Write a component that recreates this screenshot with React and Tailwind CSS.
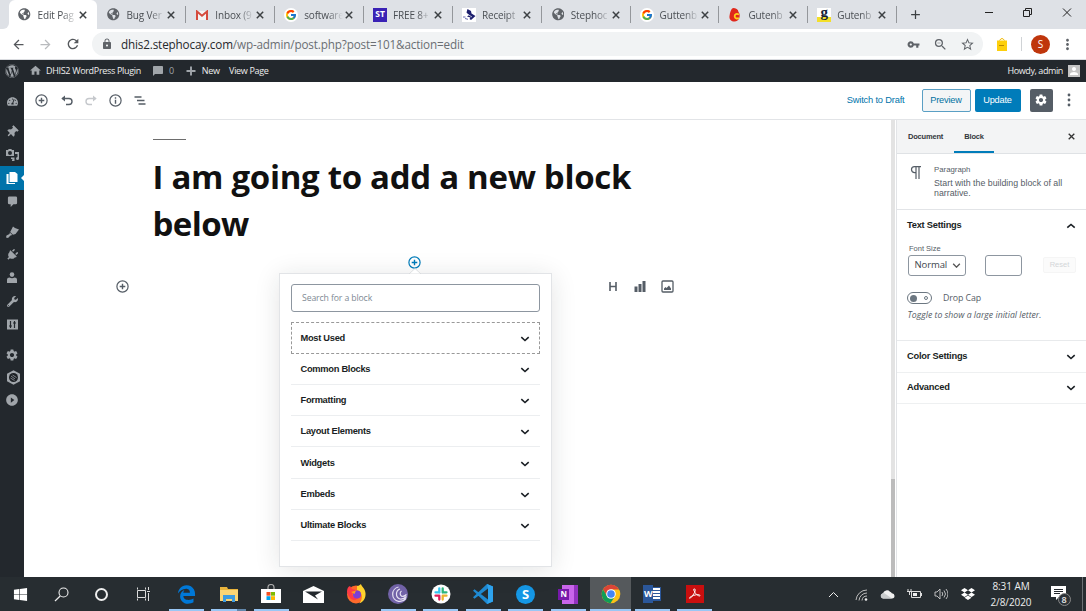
import React from "react";
import { FaWordpress, FaThumbtack, FaTachometerAlt, FaPlug, FaWrench, FaEdgeLegacy, FaWindows, FaDropbox, FaGlobeAmericas } from "react-icons/fa";
import { FcGoogle } from "react-icons/fc";
import { MdHome, MdModeComment, MdAdd, MdSettings, MdLock, MdArrowBack, MdArrowForward, MdRefresh, MdVpnKey, MdZoomOut, MdStarBorder, MdMoreVert, MdPlayCircleFilled, MdPerson } from "react-icons/md";

const UI = "font-['Open_Sans','Noto_Sans',sans-serif]";
const ARIAL = "font-['Liberation_Sans',Arial,sans-serif]";

const Cross = ({ className }) => (
  <svg viewBox="0 0 8 8" className={className} fill="none" stroke="currentColor" strokeWidth="1.500"><path d="M.8.8l6.400 6.400M7.200.8L.8 7.200" /></svg>
);
const Globe = () => <FaGlobeAmericas className="h-[12.500px] w-[12.500px] text-[#5f6368]" />;
const Gmail = () => (
  <svg viewBox="0 0 12 10" className="h-[10px] w-3">
    <path d="M0 1h12v9H0z" fill="#f3f3f3" />
    <path d="M1 10V1.500l5 4.300 5-4.300V10" fill="none" stroke="#d54b3d" strokeWidth="2" />
  </svg>
);
const Google = () => (
  <span className="flex h-[14px] w-[14px] items-center justify-center rounded-full bg-white"><FcGoogle className="h-3 w-3" /></span>
);
const St = () => (
  <span className={`${UI} flex h-[14px] w-[14px] items-center justify-center bg-[#3a22b5] text-[8.500px] font-bold text-white`}>ST</span>
);
const Receipt = () => (
  <svg viewBox="0 0 14 14" className="h-[14px] w-[14px]">
    <path d="M0 0h14v14H0z" fill="#fff" />
    <path d="M5.500 1l3.500 2 .5 2.500L13.500 8 9 12 7.500 11l1-1.500L5 8.500 7 7 4.500 4.500z" fill="#1c1f6e" />
    <path d="M6 6.500l4 2.500" stroke="#fff" strokeWidth="0.700" />
    <path d="M1 9h2.500M3 10.500l3 .8" stroke="#6a6cb0" strokeWidth="1" />
  </svg>
);
const RedBird = () => (
  <svg viewBox="0 0 12 14" className="h-[14px] w-3">
    <path d="M4 0c3 0 5 1 5.500 4 2 2 2 9-3.500 9.500C2 14 0 11 .5 8 1 4 2 1 4 0z" fill="#e0281c" />
    <path d="M10 6.500c-3-1.500-4.500 0-4.300 2S8 11 10 10" fill="none" stroke="#ffd21e" strokeWidth="1.800" />
  </svg>
);
const GLetter = () => (
  <span className="flex h-[14px] w-[14px] items-center justify-center bg-[linear-gradient(#fff_65%,#f3df2a_65%)] pb-[4px] font-['Liberation_Serif',serif] text-[15px] font-bold leading-none text-[#142337]">g</span>
);

const tabs = [
  ["Edit Pag", Globe], ["Bug Ver", Globe], ["Inbox (9", Gmail], ["software", Google], ["FREE 8+", St],
  ["Receipt", Receipt], ["Stephoc", Globe], ["Guttenb", Google], ["Gutenb", RedBird], ["Gutenb", GLetter],
];

function Tab({ label, Icon, active, line }) {
  return (
    <div className={`flex h-[29px] w-[88.860px] shrink-0 items-center pl-[9px] ${active ? "rounded-t-[6px] bg-white" : ""}`}>
      <span className="flex w-[14px] shrink-0 items-center justify-center"><Icon /></span>
      <span className={`${UI} ml-[6px] flex w-[39px] shrink-0 text-[10px] leading-[14px] tracking-[-0.150px] text-[#4b4f54]`}>
        <span className="whitespace-nowrap [mask-image:linear-gradient(90deg,#000_24px,transparent_39px)]">{label}</span>
      </span>
      <Cross className="ml-[2px] h-[8px] w-[8px] shrink-0 text-[#3c4043]" />
      {line && <span className="ml-auto h-[17px] w-px bg-[#94979b]" />}
    </div>
  );
}

function Browser() {
  return (
    <header className="shrink-0">
      <div className="flex h-[29px] bg-[#dee1e6]">
        <div className="flex w-[8.600px] items-end bg-white"><span className="h-[29px] w-full rounded-br-[6px] bg-[#dee1e6]" /></div>
        {tabs.map(([l, I], i) => <Tab key={i} label={l} Icon={I} active={i === 0} line={i > 0} />)}
        <div className="flex w-[36px] items-center justify-center"><MdAdd className="h-[15px] w-[15px] text-[#3c4043]" /></div>
        <svg viewBox="0 0 90 12" className="ml-auto mt-[7px] mr-[11px] h-3 w-[90px]" fill="none" stroke="#222">
          <path d="M0 5.500h8M38.500 3.500h6v6h-6zM40.500 3.500v-2h6v6h-2M78 1.500l8 8M86 1.500l-8 8" />
        </svg>
      </div>
      <div className="flex h-[31px] items-center border-b border-[#dadce0] bg-white pl-[11px]">
        <MdArrowBack className="h-[15px] w-[15px] text-[#55585c]" />
        <MdArrowForward className="ml-[12px] h-[15px] w-[15px] text-[#b9bbbe]" />
        <MdRefresh className="ml-[12px] h-[16px] w-[16px] text-[#55585c]" />
        <div className="ml-[11px] flex h-[24px] w-[891px] items-center rounded-full bg-[#f1f3f4] pl-[9px] pr-[8px]">
          <MdLock className="h-[12px] w-[12px] text-[#5f6368]" />
          <span className={`${UI} ml-[8px] whitespace-nowrap pt-px text-[11.700px] tracking-[-0.150px] text-[#6a6e73]`}><span className="text-[#26282b]">dhis2.stephocay.com</span>/wp-admin/post.php?post=101&amp;action=edit</span>
          <MdVpnKey className="ml-auto h-[13px] w-[13px] text-[#5f6368]" />
          <MdZoomOut className="ml-[13px] h-[15px] w-[15px] text-[#5f6368]" />
          <MdStarBorder className="ml-[12px] h-[15px] w-[15px] text-[#5f6368]" />
        </div>
        <svg viewBox="0 0 10 13" className="ml-[14px] h-[13px] w-[10px]">
          <path d="M0 2.500h10V13H0z" fill="#fdcf0b" /><path d="M2.500 2.500q2.500-4 5 0" fill="none" stroke="#f0b800" /><path d="M2 7.500h5" stroke="#b98a00" />
        </svg>
        <span className="ml-[14px] h-[14px] w-px bg-[#d0d3d6]" />
        <span className={`${UI} ml-[9px] flex h-[19px] w-[19px] items-center justify-center rounded-full bg-[#bf360c] text-[10px] text-white`}>S</span>
        <MdMoreVert className="ml-[9px] h-[17px] w-[17px] text-[#5f6368]" />
      </div>
    </header>
  );
}

function AdminBar() {
  return (
    <div className={`${UI} flex h-[21.500px] shrink-0 items-center bg-[#23282d] pl-[5px] pr-[6px] text-[9px] tracking-[-0.320px] text-[#eee]`}>
      <FaWordpress className="h-[14px] w-[14px] text-[#a0a5aa]" />
      <MdHome className="ml-[10px] h-[13px] w-[13px] text-[#a0a5aa]" />
      <span className="ml-[4px]">DHIS2 WordPress Plugin</span>
      <MdModeComment className="ml-[11px] h-[12px] w-[12px] -scale-x-100 text-[#a0a5aa]" />
      <span className="ml-[5px] text-[#a0a5aa]">0</span>
      <svg viewBox="0 0 10 10" className="ml-[12px] h-[10px] w-[10px]"><path d="M5 .5v9M.5 5h9" stroke="#a0a5aa" strokeWidth="1.900" /></svg>
      <span className="ml-[6px]">New</span>
      <span className="ml-[9.500px]">View Page</span>
      <span className="ml-auto tracking-[-0.400px]">Howdy, admin</span>
      <span className="ml-[5px] flex h-[12px] w-[12px] items-end justify-center bg-[#c5c5c5]"><MdPerson className="h-3 w-3 text-white" /></span>
    </div>
  );
}

const Media = () => (
  <svg viewBox="0 0 13 13" className="h-[13px] w-[13px]" fill="currentColor">
    <path fillRule="evenodd" d="M0 2h2l.7-1h2.600L6 2h2v6H0zm4 1a2 2 0 100 4 2 2 0 000-4z" /><path d="M9 4h4v6.500a1.500 1.500 0 11-1.500-1.500V6H9zM5 9.500h3.500V12a1.300 1.300 0 11-1.500-1H5z" />
  </svg>
);
const Pages = () => (
  <svg viewBox="0 0 12 12" className="h-3 w-3" fill="currentColor"><path d="M3.500 0H9l2.500 2v8h-8z" /><path d="M.5 2H2.600v9H9v1H.5z" /></svg>
);
const CommentIcon = () => (
  <svg viewBox="0 0 12 12" className="h-[11px] w-[11px]" fill="currentColor"><path d="M2.500.5h7A1.500 1.500 0 0111 2v5.500A1.500 1.500 0 019.500 9H7l-3 3V9H2.500A1.500 1.500 0 011 7.500V2A1.500 1.500 0 012.500.5z" /></svg>
);
const Brush = () => (
  <svg viewBox="0 0 13 12" className="h-[12px] w-[13px]" fill="currentColor"><path d="M7 .5L9 2l4 1.500L9.500 8 7 8.800 4.200 6zM3.800 6.500L6.300 9 4.500 9.500 2 12 0 11.500.5 9.500l3-1.500z" /></svg>
);
const UserIcon = () => (
  <svg viewBox="0 0 12 12" className="h-3 w-3" fill="currentColor"><circle cx="6" cy="2.600" r="2.300" /><path d="M1 7.500q0-2 2.500-2 2.500 1.500 5 0 2.500 0 2.500 2V11H1z" /></svg>
);
const Sliders = () => (
  <svg viewBox="0 0 11 11" className="h-[11px] w-[11px]"><path d="M0 .5h11v10H0z" fill="currentColor" /><path d="M3.500 2v7M7.500 2v7M2 7h3M6 4h3" stroke="#23282d" strokeWidth="1.200" /></svg>
);
const Hex = () => (
  <svg viewBox="0 0 15 15" className="ml-[2px] h-[15px] w-[15px]"><path d="M7.500.3l6.500 3.500v7.400l-6.500 3.500L1 11.200V3.800z" fill="#a0a5aa" /><circle cx="7.500" cy="7.500" r="4.500" fill="#1c2024" /><path d="M5 6l4 3M6.500 5l4 2.500M4.500 8l4 2.500" fill="none" stroke="#8a8f94" strokeWidth="0.900" /></svg>
);

const sideGroups = [
  [FaTachometerAlt],
  [FaThumbtack, Media, Pages, CommentIcon],
  [Brush, FaPlug, UserIcon, FaWrench, Sliders],
  [MdSettings, Hex, MdPlayCircleFilled],
];

function SideBar() {
  return (
    <nav className="flex w-[24px] shrink-0 flex-col gap-[7.400px] bg-[#23282d] pt-[8px] text-[#a0a5aa]">
      {sideGroups.map((g, i) => (
        <div key={i}>
          {g.map((I, j) => {
            const on = I === Pages;
            return (
              <div key={j} className={`relative flex items-center justify-center ${i === 3 ? "h-[22.600px]" : "h-[23.200px]"} ${on ? "bg-[#0073aa] text-white" : ""}`}>
                <I className={i === 3 ? "h-[14px] w-[14px]" : I === FaThumbtack || I === FaPlug ? "h-[12px] w-[12px] rotate-45" : "h-[11px] w-[11px]"} />
                {on && <span className="absolute right-0 top-[9px] h-0 w-0 border-y-[3px] border-r-[3px] border-y-transparent border-r-white" />}
              </div>
            );
          })}
        </div>
      ))}
    </nav>
  );
}

const PlusCircle = ({ className }) => (
  <svg viewBox="0 0 13 13" className={className} fill="none" stroke="currentColor"><circle cx="6.500" cy="6.500" r="5.600" strokeWidth="1.200" /><path d="M6.500 3.700v5.600M3.700 6.500h5.600" strokeWidth="1.400" /></svg>
);
const Chevron = ({ up }) => (
  <svg viewBox="0 0 10 6" className="h-[6px] w-[10px]" fill="none" stroke="#191e23" strokeWidth="1.600"><path d={up ? "M1.300 4.700L5 1.500l3.700 3.200" : "M1.300 1.200L5 4.500l3.700-3.300"} /></svg>
);

function EditorBar() {
  return (
    <div className={`${ARIAL} flex h-[38.500px] shrink-0 items-center border-b border-[#e2e4e7] bg-white pl-[11px] pr-[15.500px] tracking-[-0.180px]`}>
      <PlusCircle className="h-[13px] w-[13px] text-[#555d66]" />
      <svg viewBox="0 0 12 11" className="ml-[13px] h-[11px] w-3" fill="none" stroke="#555d66" strokeWidth="1.400"><path d="M1.500 3.500h6.500a3 3 0 010 6H5" /><path d="M4 .5v6L.3 3.500z" fill="#555d66" stroke="none" /></svg>
      <svg viewBox="0 0 12 11" className="ml-[12px] h-[11px] w-3" fill="none" stroke="#c5c8cc" strokeWidth="1.400"><path d="M10.500 3.500H4a3 3 0 000 6h3" /><path d="M8 .5v6l3.700-3z" fill="#c5c8cc" stroke="none" /></svg>
      <svg viewBox="0 0 13 13" className="ml-[12px] h-[13px] w-[13px]" fill="none" stroke="#555d66"><circle cx="6.500" cy="6.500" r="5.600" strokeWidth="1.200" /><path d="M6.500 5.700v4M6.500 3.300v1.400" strokeWidth="1.400" /></svg>
      <svg viewBox="0 0 12 9" className="ml-[12px] h-[9px] w-3" stroke="#555d66" strokeWidth="1.300"><path d="M.5 1H7.500M3 4.500h7.500M4.500 8h7" /></svg>
      <span className="ml-auto pt-px text-[9.300px] text-[#0073aa]">Switch to Draft</span>
      <span className="ml-[17px] flex h-[23px] w-[49px] items-center justify-center rounded-[2px] border border-[#5a9fc4] bg-[#f3f5f6] pt-[2px] text-[9.200px] text-[#0071a1]">Preview</span>
      <span className="ml-[4px] flex h-[23px] w-[46px] items-center justify-center rounded-[2px] bg-[#007cba] pt-[2px] text-[9.200px] text-white">Update</span>
      <span className="ml-[9px] flex h-[23px] w-[23px] items-center justify-center rounded-[2px] bg-[#555d66]"><MdSettings className="h-[14px] w-[14px] text-white" /></span>
      <svg viewBox="0 0 4 14" className="ml-[14px] h-[14px] w-1" fill="#555d66"><circle cx="2" cy="2" r="1.400" /><circle cx="2" cy="7" r="1.400" /><circle cx="2" cy="12" r="1.400" /></svg>
    </div>
  );
}

const cats = ["Most Used", "Common Blocks", "Formatting", "Layout Elements", "Widgets", "Embeds", "Ultimate Blocks"];

function Inserter() {
  return (
    <div className="absolute left-[255px] top-[153px] h-[294px] w-[273px] border border-[#e2e4e7] bg-white pl-[10.500px] pr-[11.500px] pt-[10px] shadow-[0_3px_24px_rgba(25,30,35,0.12)]">
      <svg viewBox="0 0 12 6" className="absolute left-[129px] top-[-6px] h-[6px] w-3"><path d="M0 6l6-5.500L12 6z" fill="#fff" stroke="#d5d8db" strokeWidth="0.800" /></svg>
      <div className={`${UI} flex h-[28px] items-center rounded-[3px] border border-[#8d96a0] pl-[10.500px] pt-px text-[8.700px] tracking-[-0.120px] text-[#7e8993]`}>Search for a block</div>
      <div className={`${ARIAL} mt-[10px] text-[9.300px] font-bold tracking-[-0.280px] text-[#191e23]`}>
        {cats.map((c, i) => (
          <div key={c} className={`flex items-center justify-between ${i === 0 ? "h-[31.500px] border border-dashed border-[#999] pl-[9px] pr-[9px] pt-[2px]" : "h-[31.300px] border-b border-[#eceef0] pl-[10px] pr-[10px] pt-[2px]"}`}>
            <span className="whitespace-nowrap">{c}</span><Chevron />
          </div>
        ))}
      </div>
    </div>
  );
}

function Canvas() {
  return (
    <main className="relative flex min-w-0 flex-1 bg-white">
      <div className="flex flex-1 flex-col pt-[19px]">
        <div className="ml-[129px] h-px w-[33px] bg-[#6d6d6d]" />
        <h1 className={`${UI} ml-[128.500px] mt-[13px] w-[520px] text-[33px] font-bold leading-[47px] tracking-[-0.300px] text-[#111]`}>I am going to add a new block<br /><span className="tracking-[-0.600px]">below</span></h1>
        <PlusCircle className="ml-[383.500px] mt-[8.500px] h-[13px] w-[13px] text-[#007cba]" />
        <div className="mt-[11.500px] flex h-[13px] items-center pl-[91.700px] text-[#555d66]">
          <PlusCircle className="h-[13px] w-[13px]" />
          <svg viewBox="0 0 8 9" className="ml-[480.500px] h-[9px] w-2" fill="none" stroke="currentColor" strokeWidth="1.600"><path d="M1 0v9M7 0v9M1 4.500h6" /></svg>
          <svg viewBox="0 0 12 12" className="mb-px ml-[17px] h-3 w-3" fill="currentColor"><path d="M.5 6.500h3V12h-3zM4.500 4h3v8h-3zM8.500 1h3v11h-3z" /></svg>
          <svg viewBox="0 0 13 13" className="ml-[15px] h-[13px] w-[13px]"><rect x="1" y="1" width="11" height="11" rx="1" fill="none" stroke="currentColor" strokeWidth="1.300" /><path d="M3 10V8.500L4.500 7l1 1L8 5.500l2 3V10z" fill="currentColor" /></svg>
        </div>
      </div>
      <div className="mr-px flex w-[4px] flex-col justify-end bg-[#e3e3e3]"><div className="h-[98px] bg-[#bcbcbc]" /></div>
      <Inserter />
    </main>
  );
}

function Settings() {
  return (
    <aside className={`${ARIAL} w-[190px] shrink-0 border-l border-[#e2e4e7] bg-white text-[#555d66]`}>
      <div className="flex h-[34px] items-center border-b border-[#dfe2e5] bg-[#f3f4f5] pl-[11px] pr-[11px] text-[7.500px] font-bold tracking-[-0.200px] text-[#32373c]">
        <span>Document</span>
        <span className="ml-[11px] flex h-[33px] w-[40px] items-center justify-center border-b-2 border-[#007cba] pt-[2px]">Block</span>
        <Cross className="ml-auto h-[7px] w-[7px] text-[#333]" />
      </div>
      <div className="flex h-[56px] border-b border-[#e2e4e7] pl-[13px] pt-[11px]">
        <svg viewBox="0 0 11 13" className="mt-[1px] h-[13px] w-[11px]" fill="none" stroke="#555d66" strokeWidth="1.200"><path d="M11 .6H4.500a3 3 0 000 6H6M6 .6V13M9 .6V13" /></svg>
        <div className="ml-[13px] text-[8.800px] leading-[10px]">
          <div className="text-[7.800px]">Paragraph</div>
          <div className="mt-[3px] whitespace-nowrap">Start with the building block of all<br />narrative.</div>
        </div>
      </div>
      <div className="h-[131px] border-b border-[#e8eaec] pl-[10px] pr-[10px]">
        <div className="flex h-[31px] items-center justify-between text-[9.300px] font-bold tracking-[-0.250px] text-[#191e23]">Text Settings<Chevron up /></div>
        <div className="ml-[2px] mt-[3px] text-[7.500px] leading-[9px]">Font Size</div>
        <div className="mt-[1.500px] flex items-center pl-[1px]">
          <div className={`${UI} flex h-[21px] w-[58px] items-center justify-between rounded-[3px] border border-[#8d96a0] pl-[5.500px] pr-[4px] pt-px text-[9.500px] tracking-[-0.100px] text-[#40464d]`}>Normal
            <svg viewBox="0 0 10 6" className="h-[5px] w-[9px]" fill="none" stroke="#555" strokeWidth="1.600"><path d="M1 1l4 4 4-4" /></svg>
          </div>
          <div className="ml-[19px] h-[21px] w-[37px] rounded-[3px] border border-[#8d96a0]" />
          <div className="ml-auto flex h-[16px] w-[33px] items-center justify-center rounded-[2px] border border-[#f5f5f5] bg-[#fbfbfb] text-[7.500px] text-[#d3d6d9]">Reset</div>
        </div>
        <div className={`${UI} mt-[16px] flex items-center text-[8.800px] leading-[13px]`}>
          <span className="flex h-[12px] w-[25px] items-center justify-between rounded-full border-[1.500px] border-[#6c7781] pl-[2px] pr-[3px]"><i className="h-[7px] w-[7px] rounded-full bg-[#6c7781]" /><i className="h-[4px] w-[4px] rounded-full border border-[#6c7781]" /></span>
          <span className="ml-[11px] tracking-[-0.100px]">Drop Cap</span>
        </div>
        <div className={`${UI} mt-[4px] whitespace-nowrap pl-[0.500px] text-[8.700px] italic leading-[12px]`}>Toggle to show a large initial letter.</div>
      </div>
      {["Color Settings", "Advanced"].map((t, i) => (
        <div key={t} className={`flex h-[31.500px] items-center justify-between border-b border-[#eef0f1] pl-[10px] pr-[10px] text-[9.300px] font-bold tracking-[-0.230px] text-[#191e23] ${i === 0 ? "pt-[2px]" : "pt-px"}`}>{t}<Chevron /></div>
      ))}
    </aside>
  );
}

const S = ({ children, box = "0 0 20 20", className = "h-5 w-5" }) => <svg viewBox={box} className={className}>{children}</svg>;
const apps = [
  { el: <FaEdgeLegacy className="h-[19px] w-[19px] text-[#0078d7]" />, run: true },
  { el: <S><path d="M1 3h7l1 2h10v12H1z" fill="#e9b43c" /><path d="M1 6h18v11H1z" fill="#fbd575" /><path d="M4 18v-7h12v7h-3v-3H7v3z" fill="#3d9be0" /></S>, run: true, multi: true },
  { el: <S><path d="M7 6V3a3 2.500 0 016 0v3" fill="none" stroke="#aaa" strokeWidth="1.200" /><path d="M0 5h20v14H0z" fill="#fff" /><path d="M5.500 8h4v3.700h-4z" fill="#f25022" /><path d="M10 8h4v3.700h-4z" fill="#7fba00" /><path d="M5.500 12.200h4V16h-4z" fill="#00a4ef" /><path d="M10 12.200h4V16h-4z" fill="#ffb900" /></S>, run: true },
  { el: <S box="0 0 21 18" className="h-[18px] w-[21px]"><path d="M0 6l10.500-5L21 6v12H0z" fill="#fff" /><path d="M2 6.500h17L12 10.500l3 4z" fill="#23282d" /></S> },
  { el: <S><circle cx="10" cy="10.500" r="9" fill="#ff6a2b" /><path d="M11 2c2 0 4-2 4-2 0 2 4 4 4.500 9s-2 9-6 10.300C17 15 17 8 11 6z" fill="#ffd22e" /><path d="M1 8Q1 3 4 2l2 3 4 1-4 4q2 5 7 3-3 5-8 2-3-3-4-7z" fill="#ff3b47" /><circle cx="11" cy="10.500" r="4" fill="#7b3fd6" /><path d="M5 8l5-1.500L8.500 10z" fill="#ff9a1e" /></S> },
  { el: <S><circle cx="10" cy="10" r="10" fill="#7263a8" /><path d="M18 14.500Q15 18 10.500 17.300A7.300 7.300 0 0110.500 3M18.500 12.500q-3 3-6.500 2.500A5.300 5.300 0 0112 5M18.500 10.500q-2 2-4.500 2A3.200 3.200 0 0113.500 7" fill="none" stroke="#e7e3f3" strokeWidth="1.200" /></S>, run: true },
  { el: <S><circle cx="10" cy="10" r="9.500" fill="#fff" /><g strokeWidth="2.300" strokeLinecap="round"><path d="M8.300 4.500v4M4.500 8.300h4" stroke="#36c5f0" /><path d="M11.700 4.500v4M11.700 8.300h3.800" stroke="#2eb67d" /><path d="M11.700 11.700v3.800M11.700 11.700h3.800" stroke="#ecb22e" /><path d="M8.300 11.700v3.800M4.500 11.700h3.800" stroke="#e01e5a" /></g></S>, run: true },
  { el: <S><path d="M14 0l6 2.500v15L14 20 2 8.500 0 6.800l1.500-1.500L15 15.500v-11L1.500 14.700 0 13.200z" fill="#1f8ad2" /><path d="M14 0l6 2.500v15L14 20l1-4.500v-11z" fill="#2ea3ee" /></S>, run: true },
  { el: <span className={`${UI} flex h-[19px] w-[19px] items-center justify-center rounded-full bg-[#1597e5] text-[13px] font-bold leading-none text-white`}>S</span>, run: true },
  { el: <span className="flex h-[19px] w-5 items-center bg-[linear-gradient(90deg,transparent_20%,#c965ea_20%_80%,#9332bf_80%)]"><i className={`${UI} flex h-[11px] w-[11px] items-center justify-center bg-[#7719aa] text-[8px] font-bold not-italic text-white`}>N</i></span>, run: true },
  { el: <S><circle cx="10" cy="10" r="9.300" fill="#fbc116" /><path d="M2 5.300A9.300 9.300 0 0118 5.400H10L6 12z" fill="#db4437" /><path d="M2 5.300A9.300 9.300 0 009.500 19.300L14 12.300 6 12.300z" fill="#109d58" /><circle cx="10" cy="10" r="4.800" fill="#fff" /><circle cx="10" cy="10" r="3.800" fill="#4285f4" /></S>, run: true, on: true },
  { el: <span className="flex h-[18px] w-[18px] items-center justify-end bg-[linear-gradient(90deg,#2b579a_56%,transparent_56%)]"><i className={`${UI} w-[10px] text-center text-[9px] font-bold not-italic text-white`}>W</i><i className="h-[14px] w-[8px] border border-l-0 border-[#2b579a] bg-[repeating-linear-gradient(#fff_0_2px,#2b579a_2px_3px)]" /></span>, run: true },
  { el: <S><path d="M1 1h18v18H1z" fill="#c90f0f" /><path d="M9.500 5c2 0 0 5-4 9-2 1-1.500-1 3-2.500s6-1 6.500 0-3 .5-5-3-1.500-3.500-.5-3.500z" fill="none" stroke="#fff" /></S>, run: true },
];

function TaskBar() {
  return (
    <footer className="flex h-[34px] shrink-0 bg-[#272d31] text-[#eee]">
      <div className="flex w-[40.800px] items-center justify-center"><FaWindows className="h-[15px] w-[15px] text-white" /></div>
      <div className="flex w-[40.800px] items-center justify-center"><S box="0 0 15 15" className="h-[15px] w-[15px]"><circle cx="9.500" cy="5.500" r="4.500" fill="none" stroke="#eee" strokeWidth="1.100" /><path d="M6.200 9L1 14" stroke="#eee" strokeWidth="1.200" /></S></div>
      <div className="flex w-[40.800px] items-center justify-center"><i className="h-[13px] w-[13px] rounded-full border-2 border-[#eee]" /></div>
      <div className="flex w-[42.600px] items-center justify-center pr-[2px]"><S box="0 0 14 14" className="h-[14px] w-[14px]"><path d="M1.500 3.500h8v7h-8zM1.500.5v2M9.500.5v2M1.500 11.500v2M9.500 11.500v2M12.500 0v3M12.500 6v8M11 4.500h3" fill="none" stroke="#ddd" /></S></div>
      {apps.map((a, i) => (
        <div key={i} className={`flex shrink-0 flex-col items-center ${a.on ? "ml-[0.600px] w-[41.250px] bg-[#55595c]" : "w-[42.450px]"}`}>
          <div className="flex h-[32px] w-full items-center justify-center pt-[2px]">{a.el}</div>
          {a.run && <div className={`h-[2px] ${a.multi ? "bg-[linear-gradient(90deg,#99c7f5_75%,#6287ab_75%)]" : "bg-[#99c7f5]"} ${a.on ? "w-full" : "w-[35px]"}`} />}
        </div>
      ))}
      <div className="ml-auto flex items-center">
        <S box="0 0 11 7" className="h-[7px] w-[11px]"><path d="M1 6l4.500-4.500L10 6" fill="none" stroke="#eee" /></S>
        <S box="0 0 13 13" className="ml-[16px] h-[13px] w-[13px]"><g fill="none" stroke="#bbb"><path d="M1 12A11 11 0 0112 2M4 12.500a8 8 0 018-7.500M7 12.500A5 5 0 0112 8" /></g><circle cx="11" cy="11.500" r="1.300" fill="#eee" /></S>
        <S box="0 0 15 10" className="ml-[12px] h-[10px] w-[15px]"><path d="M3 9.500a2.700 2.700 0 010-5.300A4 3.800 0 0110 2.800a3.300 3.300 0 011.800 1.500A2.600 2.600 0 0112 9.500z" fill="#f0f0f0" /><path d="M1 5.500Q2 4 4 4l8 5.500H3Q0 9 1 5.500z" fill="#c9cccd" /></S>
        <S box="0 0 15 10" className="ml-[12px] h-[10px] w-[15px]"><path d="M4.500 2.500h9v6h-9zM14.500 4v3" fill="none" stroke="#ddd" /><path d="M6 4h4v3H6z" fill="#eee" /><path d="M1 0v2M4 0v2M0 2.500h5M2.500 3v3" stroke="#ddd" /></S>
        <S box="0 0 14 12" className="ml-[12px] h-3 w-[14px]"><path d="M1 4h2l3-3v10L3 8H1zM8 4q1.500 2 0 4M10 2.500q3 3.500 0 7M12 1q4 5 0 10" fill="none" stroke="#ccc" strokeWidth="0.900" /></S>
        <FaDropbox className="ml-[13px] h-[14px] w-[14px] text-white" />
        <div className={`${UI} ml-[15px] w-[43px] whitespace-nowrap pt-px text-center text-[10px] leading-[15.500px] tracking-[-0.080px]`}>8:31 AM<br />2/8/2020</div>
        <div className="relative ml-[18px] mr-[16.500px] h-[16px] w-[15px]">
          <S box="0 0 15 14" className="h-[14px] w-[15px]"><path d="M0 0h15v11H8l-3 3v-3H0z" fill="#fff" /><path d="M3 3.500h9M3 5.500h9M3 7.500h6" stroke="#23282d" /></S>
          <span className={`${UI} absolute left-[7px] top-[7px] flex h-[13px] w-[13px] items-center justify-center rounded-full border border-[#888] bg-[#2d3338] text-[9px] font-semibold`}>8</span>
        </div>
      </div>
      <div className="mr-[3px] w-px bg-[#6b7074]" />
    </footer>
  );
}

export default function App() {
  return (
    <div className="flex h-[611px] w-[1086px] flex-col overflow-hidden bg-white">
      <Browser />
      <AdminBar />
      <div className="flex min-h-0 flex-1">
        <SideBar />
        <div className="flex min-w-0 flex-1 flex-col">
          <EditorBar />
          <div className="flex min-h-0 flex-1"><Canvas /><Settings /></div>
        </div>
      </div>
      <TaskBar />
    </div>
  );
}
